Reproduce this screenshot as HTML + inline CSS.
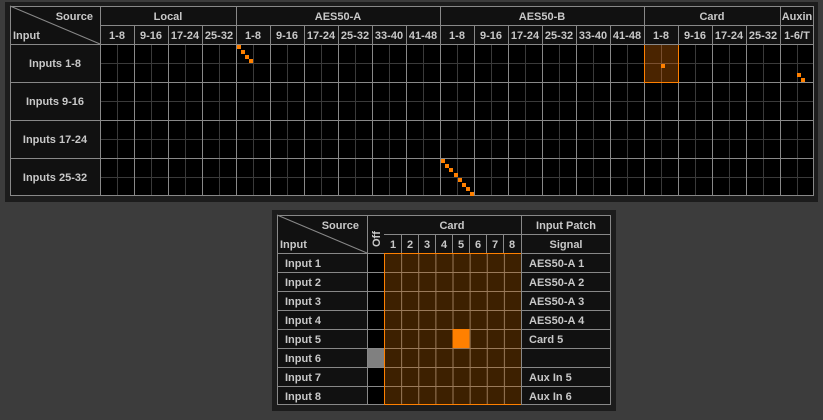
<!DOCTYPE html>
<html><head><style>
html,body{margin:0;padding:0;background:#3c3c3c;width:823px;height:420px;overflow:hidden}
svg{display:block}
text{font-family:"Liberation Sans",sans-serif;font-weight:bold;font-size:11px;fill:#c8c8c8}
</style></head><body>
<svg width="823" height="420" xmlns="http://www.w3.org/2000/svg">
<defs>
<pattern id="g1" x="100" y="44" width="34" height="38" patternUnits="userSpaceOnUse">
<rect width="34" height="38" fill="#000"/>
<line x1="17.5" y1="0" x2="17.5" y2="38" stroke="#3a3a3a"/>
<line x1="0" y1="19.5" x2="34" y2="19.5" stroke="#3a3a3a"/>
<line x1="0.5" y1="0" x2="0.5" y2="38" stroke="#888"/>
<line x1="0" y1="0.5" x2="34" y2="0.5" stroke="#888"/>
</pattern>
<pattern id="g2" x="384" y="253" width="17.125" height="19" patternUnits="userSpaceOnUse">
<rect width="17.125" height="19" fill="#3d2000"/>
<line x1="0.5" y1="0" x2="0.5" y2="19" stroke="#9a7a5a"/>
<line x1="0" y1="0.5" x2="17.125" y2="0.5" stroke="#9a7a5a"/>
</pattern>
</defs>
<!-- top panel -->
<rect x="5" y="2" width="813" height="200" fill="#1c1c1c"/>
<rect x="10" y="6" width="804" height="190" fill="#111"/>
<rect x="100" y="44" width="714" height="152" fill="url(#g1)"/>
<!-- card block -->
<rect x="644.5" y="44.5" width="34" height="38" fill="#4a2400" stroke="#ff8000"/>
<line x1="661.5" y1="45" x2="661.5" y2="82" stroke="#7a5030"/>
<line x1="645" y1="63.5" x2="678" y2="63.5" stroke="#7a5030"/>
<g stroke="#888" fill="none">
<rect x="10.5" y="6.5" width="803" height="189"/>
<line x1="100.5" y1="6" x2="100.5" y2="196"/>
<line x1="100" y1="25.5" x2="814" y2="25.5"/>
<line x1="10" y1="44.5" x2="814" y2="44.5"/>
<line x1="10" y1="82.5" x2="100" y2="82.5"/>
<line x1="10" y1="120.5" x2="100" y2="120.5"/>
<line x1="10" y1="158.5" x2="100" y2="158.5"/>
<line x1="236.5" y1="6" x2="236.5" y2="44"/><line x1="440.5" y1="6" x2="440.5" y2="44"/>
<line x1="644.5" y1="6" x2="644.5" y2="44"/><line x1="780.5" y1="6" x2="780.5" y2="44"/>
<line x1="134.5" y1="25" x2="134.5" y2="44"/><line x1="168.5" y1="25" x2="168.5" y2="44"/><line x1="202.5" y1="25" x2="202.5" y2="44"/>
<line x1="270.5" y1="25" x2="270.5" y2="44"/><line x1="304.5" y1="25" x2="304.5" y2="44"/><line x1="338.5" y1="25" x2="338.5" y2="44"/><line x1="372.5" y1="25" x2="372.5" y2="44"/><line x1="406.5" y1="25" x2="406.5" y2="44"/>
<line x1="474.5" y1="25" x2="474.5" y2="44"/><line x1="508.5" y1="25" x2="508.5" y2="44"/><line x1="542.5" y1="25" x2="542.5" y2="44"/><line x1="576.5" y1="25" x2="576.5" y2="44"/><line x1="610.5" y1="25" x2="610.5" y2="44"/>
<line x1="678.5" y1="25" x2="678.5" y2="44"/><line x1="712.5" y1="25" x2="712.5" y2="44"/><line x1="746.5" y1="25" x2="746.5" y2="44"/>
<line x1="10" y1="6" x2="100" y2="44"/>
</g>
<g fill="#ff8000">
<rect x="237" y="45" width="4" height="4"/><rect x="241" y="50" width="4" height="4"/><rect x="245" y="55" width="4" height="4"/><rect x="249" y="59" width="4" height="4"/>
<rect x="441" y="159" width="4" height="4"/><rect x="445" y="164" width="4" height="4"/><rect x="449" y="168" width="4" height="4"/><rect x="454" y="173" width="4" height="4"/><rect x="458" y="178" width="4" height="4"/><rect x="462" y="183" width="4" height="4"/><rect x="466" y="187" width="4" height="4"/><rect x="470" y="192" width="4" height="4"/>
<rect x="661" y="64" width="4" height="4"/>
<rect x="797" y="73" width="4" height="4"/><rect x="801" y="78" width="4" height="4"/>
</g>
<text x="93" y="20" text-anchor="end">Source</text>
<text x="13" y="39">Input</text>
<g text-anchor="middle">
<text x="168" y="20">Local</text><text x="338" y="20">AES50-A</text><text x="542" y="20">AES50-B</text><text x="712" y="20">Card</text><text x="797" y="20">Auxin</text>
<text x="117" y="39">1-8</text><text x="151" y="39">9-16</text><text x="185" y="39">17-24</text><text x="219" y="39">25-32</text>
<text x="253" y="39">1-8</text><text x="287" y="39">9-16</text><text x="321" y="39">17-24</text><text x="355" y="39">25-32</text><text x="389" y="39">33-40</text><text x="423" y="39">41-48</text>
<text x="457" y="39">1-8</text><text x="491" y="39">9-16</text><text x="525" y="39">17-24</text><text x="559" y="39">25-32</text><text x="593" y="39">33-40</text><text x="627" y="39">41-48</text>
<text x="661" y="39">1-8</text><text x="695" y="39">9-16</text><text x="729" y="39">17-24</text><text x="763" y="39">25-32</text><text x="797" y="39">1-6/T</text>
<text x="55" y="67">Inputs 1-8</text><text x="55" y="105">Inputs 9-16</text><text x="55" y="143">Inputs 17-24</text><text x="55" y="181">Inputs 25-32</text>
</g>
<!-- bottom panel -->
<rect x="272" y="210" width="344" height="201" fill="#1c1c1c"/>
<rect x="277" y="215" width="334" height="190" fill="#111"/>
<rect x="367" y="253" width="17" height="152" fill="#000"/>
<rect x="367" y="348" width="17" height="19" fill="#808080"/>
<rect x="384" y="253" width="137" height="152" fill="url(#g2)"/>
<rect x="452.5" y="329" width="17" height="19" fill="#ff8000"/>
<g stroke="#888" fill="none">
<rect x="277.5" y="215.5" width="333" height="189"/>
<line x1="367.5" y1="215" x2="367.5" y2="405"/>
<line x1="384" y1="234.5" x2="611" y2="234.5"/>
<line x1="277" y1="253.5" x2="611" y2="253.5"/>
<line x1="277" y1="272.5" x2="384" y2="272.5"/><line x1="521" y1="272.5" x2="611" y2="272.5"/>
<line x1="277" y1="291.5" x2="384" y2="291.5"/><line x1="521" y1="291.5" x2="611" y2="291.5"/>
<line x1="277" y1="310.5" x2="384" y2="310.5"/><line x1="521" y1="310.5" x2="611" y2="310.5"/>
<line x1="277" y1="329.5" x2="384" y2="329.5"/><line x1="521" y1="329.5" x2="611" y2="329.5"/>
<line x1="277" y1="348.5" x2="384" y2="348.5"/><line x1="521" y1="348.5" x2="611" y2="348.5"/>
<line x1="277" y1="367.5" x2="384" y2="367.5"/><line x1="521" y1="367.5" x2="611" y2="367.5"/>
<line x1="277" y1="386.5" x2="384" y2="386.5"/><line x1="521" y1="386.5" x2="611" y2="386.5"/>
<line x1="401.5" y1="234" x2="401.5" y2="253"/><line x1="418.5" y1="234" x2="418.5" y2="253"/><line x1="435.5" y1="234" x2="435.5" y2="253"/><line x1="452.5" y1="234" x2="452.5" y2="253"/><line x1="469.5" y1="234" x2="469.5" y2="253"/><line x1="486.5" y1="234" x2="486.5" y2="253"/><line x1="503.5" y1="234" x2="503.5" y2="253"/>
<line x1="277" y1="215" x2="367" y2="253"/>
</g>
<rect x="384.5" y="253.5" width="137" height="151" fill="none" stroke="#ff8000"/>
<line x1="521.5" y1="215" x2="521.5" y2="405" stroke="#888"/>
<text x="359" y="229" text-anchor="end">Source</text>
<text x="280" y="248">Input</text>
<text transform="translate(380,247) rotate(-90)" font-size="10">Off</text>
<g text-anchor="middle">
<text x="452" y="229">Card</text>
<text x="566" y="229">Input Patch</text><text x="566" y="248">Signal</text>
<text x="393" y="248">1</text><text x="410" y="248">2</text><text x="427" y="248">3</text><text x="444" y="248">4</text><text x="461" y="248">5</text><text x="478" y="248">6</text><text x="495" y="248">7</text><text x="512" y="248">8</text>
</g>
<text x="285" y="267">Input 1</text><text x="285" y="286">Input 2</text><text x="285" y="305">Input 3</text><text x="285" y="324">Input 4</text>
<text x="285" y="343">Input 5</text><text x="285" y="362">Input 6</text><text x="285" y="381">Input 7</text><text x="285" y="400">Input 8</text>
<text x="529" y="267">AES50-A 1</text><text x="529" y="286">AES50-A 2</text><text x="529" y="305">AES50-A 3</text><text x="529" y="324">AES50-A 4</text>
<text x="529" y="343">Card 5</text><text x="529" y="381">Aux In 5</text><text x="529" y="400">Aux In 6</text>
</svg>
</body></html>
